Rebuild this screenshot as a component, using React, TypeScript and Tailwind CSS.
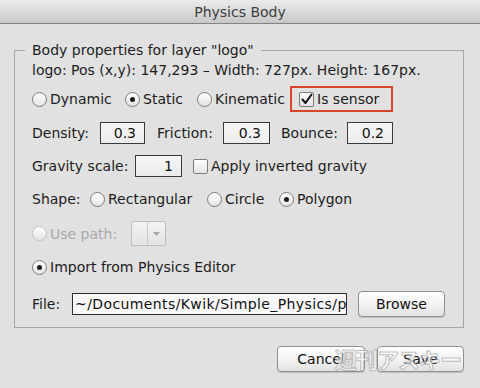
import React from "react";

const font = "font-['DejaVu_Sans','Liberation_Sans',sans-serif]";

function Radio({ checked = false, disabled = false }: { checked?: boolean; disabled?: boolean }) {
  return (
    <span
      className={`flex items-center justify-center w-[15px] h-[15px] shrink-0 rounded-full border bg-gradient-to-b from-white to-[#e4e4e4] ${
        disabled ? "border-[#c2c2c2]" : "border-[#7c7c7c]"
      }`}
    >
      {checked && <span className="w-[5px] h-[5px] rounded-full bg-[#1a1a1a]" />}
    </span>
  );
}

function Check({ checked = false }: { checked?: boolean }) {
  return (
    <span className="flex items-center justify-center w-[15px] h-[15px] shrink-0 rounded-[2px] border border-[#7c7c7c] bg-gradient-to-b from-white to-[#e4e4e4]">
      {checked && (
        <svg width="13" height="13" viewBox="0 0 13 13">
          <path d="M2.5 6.5 L5.5 10 L11.5 1.5" fill="none" stroke="#111" strokeWidth="2" strokeLinecap="round" strokeLinejoin="round" />
        </svg>
      )}
    </span>
  );
}

function NumField({ value, w }: { value: string; w: string }) {
  return (
    <div
      className={`${w} h-[22px] flex items-center justify-end pr-[8px] border border-[#3a3a3a] bg-gradient-to-b from-[#f6f6f6] to-[#ececec] text-[#111]`}
    >
      {value}
    </div>
  );
}

function Button({ label, w }: { label: string; w: string }) {
  return (
    <div
      className={`${w} h-[26px] flex items-center justify-center rounded-[4px] border border-[#8f8f8f] bg-gradient-to-b from-white via-[#f3f3f3] to-[#e2e2e2] shadow-[0_1px_1px_rgba(0,0,0,0.15)] text-[#111]`}
    >
      {label}
    </div>
  );
}

export default function App() {
  return (
    <div className={`relative w-[480px] h-[388px] overflow-hidden bg-[#e1e1e1] text-[14px] leading-[16px] text-[#1c1c1c] ${font}`}>
      {/* title bar */}
      <div className="h-[24px] flex items-center justify-center border-b border-[#838383] bg-gradient-to-b from-[#ececec] to-[#c8c8c8] text-[#3d3d3d]">
        Physics Body
      </div>

      <fieldset className="mt-[18px] ml-[14px] w-[450px] border border-[#a6a6a6] pl-[17px] pr-[10px] pt-[4px] pb-[11px]">
        <legend className="ml-[-7px] px-[7px] leading-[16px]">Body properties for layer "logo"</legend>

        <div className="h-[16px] flex items-center whitespace-nowrap">logo: Pos (x,y): 147,293 – Width: 727px. Height: 167px.</div>

        {/* body type */}
        <div className="mt-[8px] h-[26px] flex items-center">
          <div className="w-[93px] flex items-center gap-[3px]">
            <Radio />
            <span>Dynamic</span>
          </div>
          <div className="w-[72px] flex items-center gap-[3px]">
            <Radio checked />
            <span>Static</span>
          </div>
          <div className="w-[93px] flex items-center gap-[3px]">
            <Radio />
            <span>Kinematic</span>
          </div>
          <div className="w-[103px] h-[26px] flex items-center gap-[3px] pl-[7px] border-2 border-[#d8432c]">
            <Check checked />
            <span>Is sensor</span>
          </div>
        </div>

        {/* density / friction / bounce */}
        <div className="mt-[10px] h-[22px] flex items-center">
          <span className="w-[68px]">Density:</span>
          <NumField value="0.3" w="w-[45px]" />
          <span className="ml-[12px] w-[66px]">Friction:</span>
          <NumField value="0.3" w="w-[47px]" />
          <span className="ml-[11px] w-[66px]">Bounce:</span>
          <NumField value="0.2" w="w-[46px]" />
        </div>

        {/* gravity */}
        <div className="mt-[11px] h-[22px] flex items-center">
          <span className="w-[103px]">Gravity scale:</span>
          <NumField value="1" w="w-[47px]" />
          <div className="ml-[11px] flex items-center gap-[3px]">
            <Check />
            <span>Apply inverted gravity</span>
          </div>
        </div>

        {/* shape */}
        <div className="mt-[11px] h-[22px] flex items-center">
          <span className="w-[58px]">Shape:</span>
          <div className="w-[117px] flex items-center gap-[3px]">
            <Radio />
            <span>Rectangular</span>
          </div>
          <div className="w-[72px] flex items-center gap-[3px]">
            <Radio />
            <span>Circle</span>
          </div>
          <div className="flex items-center gap-[3px]">
            <Radio checked />
            <span>Polygon</span>
          </div>
        </div>

        {/* use path */}
        <div className="mt-[11px] h-[25px] flex items-center">
          <div className="w-[99px] flex items-center gap-[3px] text-[#a9a9a9]">
            <Radio disabled />
            <span>Use path:</span>
          </div>
          <div className="w-[35px] h-[25px] flex border border-[#bdbdbd] rounded-[2px] bg-gradient-to-b from-[#f2f2f2] to-[#e4e4e4]">
            <div className="w-[16px] border-r border-[#c8c8c8]" />
            <div className="flex-1 flex items-center justify-center">
              <svg width="7" height="4" viewBox="0 0 7 4">
                <path d="M0 0 L7 0 L3.5 4 Z" fill="#a8a8a8" />
              </svg>
            </div>
          </div>
        </div>

        {/* import */}
        <div className="mt-[10px] h-[22px] flex items-center gap-[3px]">
          <Radio checked />
          <span>Import from Physics Editor</span>
        </div>

        {/* file */}
        <div className="mt-[13px] h-[25px] flex items-center">
          <span className="w-[40px]">File:</span>
          <div className="w-[275px] h-[22px] flex items-center overflow-hidden whitespace-nowrap pl-[2px] border border-[#2e2e2e] bg-[#f7f7f7] text-[#111] tracking-[0.4px]">
            ~/Documents/Kwik/Simple_Physics/physics
          </div>
          <div className="ml-[11px]">
            <Button label="Browse" w="w-[87px]" />
          </div>
        </div>
      </fieldset>

      {/* dialog buttons */}
      <div className="mt-[18px] pr-[16px] flex justify-end gap-[12px]">
        <Button label="Cancel" w="w-[88px]" />
        <Button label="Save" w="w-[87px]" />
      </div>

      {/* watermark */}
      <div className="absolute left-[335px] top-[343px] text-[22px] leading-[30px] tracking-[-1px] text-white/60 [-webkit-text-stroke:1px_rgba(150,150,150,0.6)] font-['Noto_Sans_CJK_JP',sans-serif] font-bold">
        週刊アスキー
      </div>
    </div>
  );
}
